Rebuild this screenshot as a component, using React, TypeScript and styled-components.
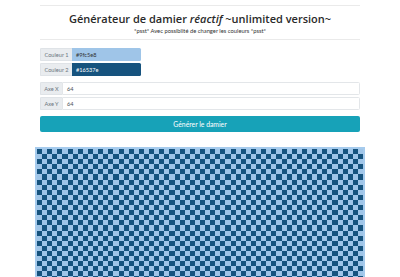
import React from "react";
import styled, { createGlobalStyle } from "styled-components";

const GlobalStyle = createGlobalStyle`
  html, body { margin: 0; padding: 0; background: #fff; }
  body { font-family: "Lato", "Open Sans", sans-serif; color: #212529; }
  * { box-sizing: border-box; }
`;

const Page = styled.div`
  width: 400px;
  display: flex;
  flex-direction: column;
  align-items: center;
  padding-top: 5px;
`;

const Container = styled.div`
  width: 320px;
  display: flex;
  flex-direction: column;
`;

const Rule = styled.hr`
  width: 100%;
  margin: 0;
  border: 0;
  border-top: 1px solid #eaeaea;
`;

const Title = styled.h1`
  margin: 6px 0 0;
  text-align: center;
  font-family: "Open Sans", sans-serif;
  font-size: 11px;
  font-weight: 600;
  line-height: 14px;
  color: #2a2a2a;
  em { font-style: italic; }
`;

const Subtitle = styled.p`
  margin: 1px 0 5px;
  text-align: center;
  font-size: 5.8px;
  line-height: 7px;
  color: #333;
`;

const Group = styled.div<{ $mt: number }>`
  display: flex;
  flex-direction: column;
  gap: 2px;
  margin-top: ${(p) => p.$mt}px;
`;

const Row = styled.div<{ $w?: number }>`
  display: flex;
  height: 13px;
  width: ${(p) => (p.$w ? `${p.$w}px` : "100%")};
`;

const Label = styled.span<{ $w: number }>`
  width: ${(p) => p.$w}px;
  display: flex;
  align-items: center;
  justify-content: center;
  background: #e9ecef;
  border: 1px solid #dfe3e7;
  border-right: 0;
  border-radius: 1.5px 0 0 1.5px;
  font-size: 5.6px;
  color: #6c757d;
`;

const ColorBox = styled.span<{ $bg: string; $fg: string }>`
  flex: 1;
  display: flex;
  align-items: center;
  padding-left: 4px;
  background: ${(p) => p.$bg};
  color: ${(p) => p.$fg};
  font-size: 5.6px;
  border-radius: 0 1.5px 1.5px 0;
`;

const Field = styled.span`
  flex: 1;
  display: flex;
  align-items: center;
  padding-left: 4px;
  border: 1px solid #e3e6e9;
  border-radius: 0 1.5px 1.5px 0;
  font-size: 5.6px;
  color: #495057;
`;

const Button = styled.button`
  margin-top: 6px;
  height: 16px;
  width: 100%;
  border: 0;
  border-radius: 2px;
  background: #17a2b8;
  color: #fff;
  font-family: "Lato", sans-serif;
  font-size: 6.8px;
  padding: 0;
`;

const Board = styled.div`
  margin-top: 15px;
  width: 330px;
  border: 2px solid #a6cbed;
  display: grid;
  grid-template-columns: repeat(64, 1fr);
`;

const Cell = styled.div<{ $dark: boolean }>`
  aspect-ratio: 1;
  background: ${(p) => (p.$dark ? "#16537e" : "#9fc5e8")};
`;

const N = 64;
const cells = Array.from({ length: N * N }, (_, i) => {
  const r = Math.floor(i / N);
  const c = i % N;
  return (r + c) % 2 === 0;
});

export default function App() {
  return (
    <>
      <GlobalStyle />
      <Page>
        <Container>
          <Rule />
          <Title>
            Générateur de damier <em>réactif</em> ~unlimited version~
          </Title>
          <Subtitle>*psst* Avec possiblité de changer les couleurs *psst*</Subtitle>
          <Rule />
          <Group $mt={8}>
            <Row $w={101}>
              <Label $w={32}>Couleur 1</Label>
              <ColorBox $bg="#9fc5e8" $fg="#333">#9fc5e8</ColorBox>
            </Row>
            <Row $w={101}>
              <Label $w={32}>Couleur 2</Label>
              <ColorBox $bg="#16537e" $fg="#fff">#16537e</ColorBox>
            </Row>
          </Group>
          <Group $mt={6}>
            <Row>
              <Label $w={22}>Axe X</Label>
              <Field>64</Field>
            </Row>
            <Row>
              <Label $w={22}>Axe Y</Label>
              <Field>64</Field>
            </Row>
          </Group>
          <Button>Générer le damier</Button>
        </Container>
        <Board>
          {cells.map((d, i) => (
            <Cell key={i} $dark={d} />
          ))}
        </Board>
      </Page>
    </>
  );
}
